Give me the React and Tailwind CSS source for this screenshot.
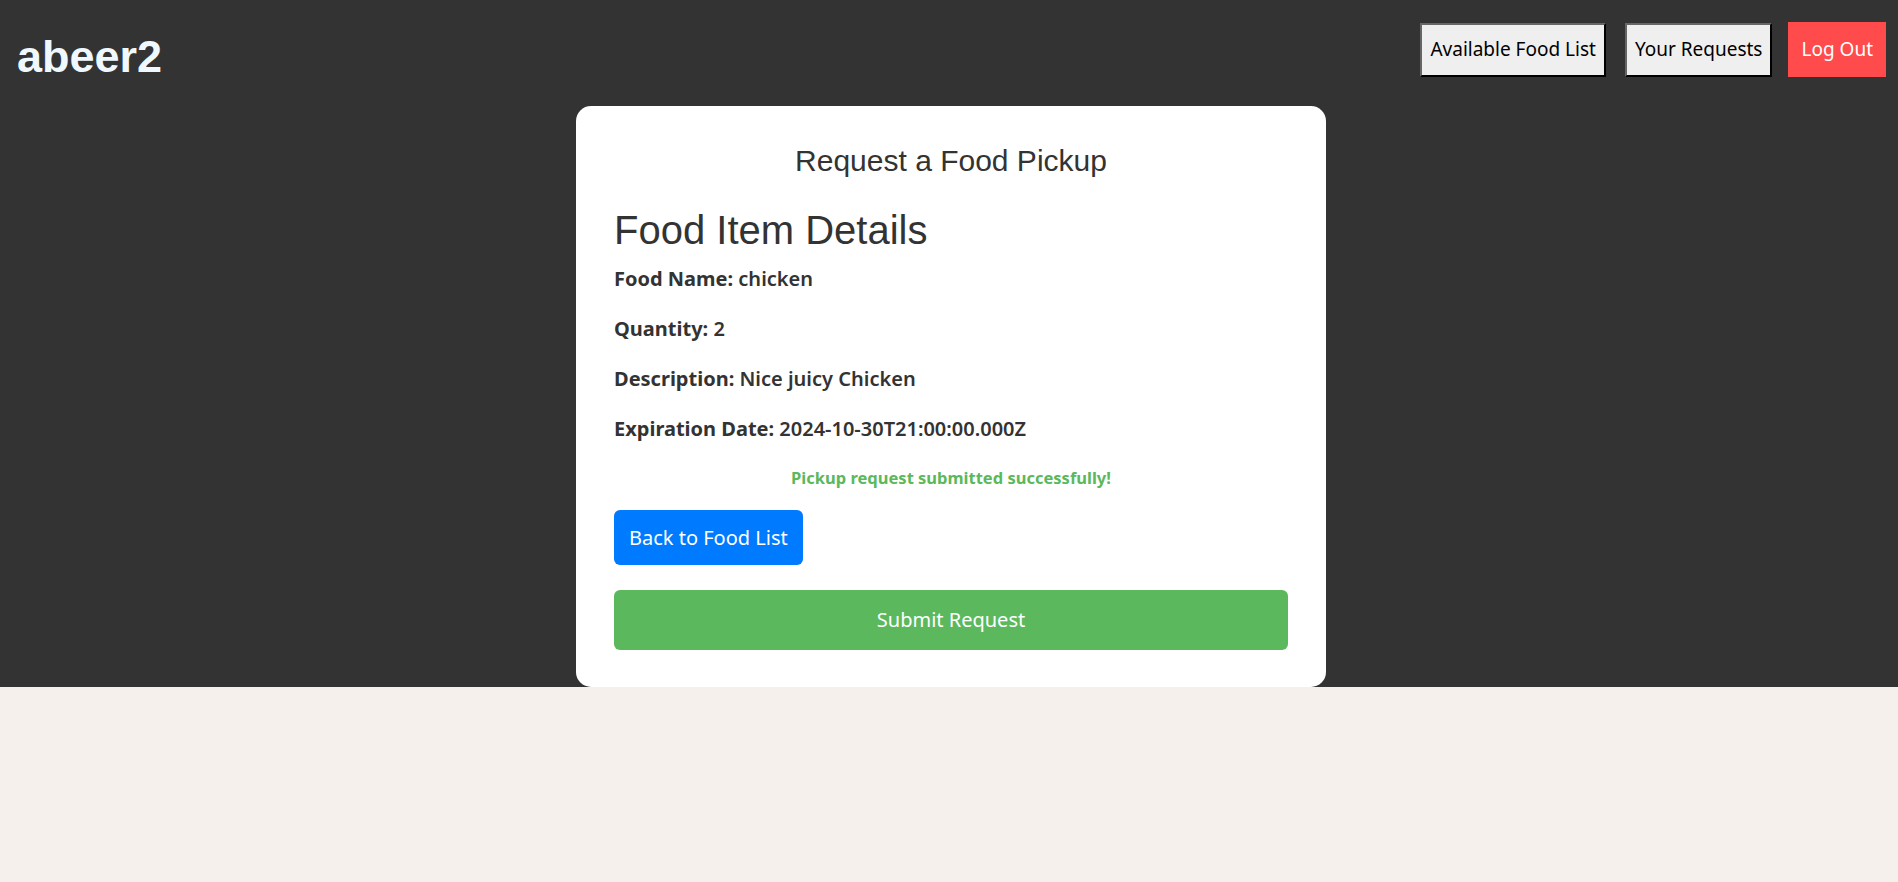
import React from 'react'

const food = {
  name: 'chicken',
  quantity: 2,
  description: 'Nice juicy Chicken',
  expiration: '2024-10-30T21:00:00.000Z',
}

function NavButton({ children, className = '' }) {
  return (
    <button
      className={`h-[54px] px-[8px] flex items-center bg-[#efefef] text-black text-[19px] border-2 border-solid border-t-[#666] border-l-[#666] border-r-black border-b-black ${className}`}
    >
      {children}
    </button>
  )
}

export default function App() {
  const rows = [
    ['Food Name:', food.name],
    ['Quantity:', food.quantity],
    ['Description:', food.description],
    ['Expiration Date:', food.expiration],
  ]

  return (
    <div className="min-h-screen bg-[#f5f0ec] font-['Noto_Sans',sans-serif]">
      <div className="bg-[#333333]">
        {/* top bar */}
        <header className="flex justify-between items-start pl-[17px] pr-[12px] h-[106px]">
          <h1 className="mt-[34px] text-[45px] leading-none font-bold text-[#f0f8ff] font-['Liberation_Sans',Arial,sans-serif]">
            abeer2
          </h1>
          <nav className="flex items-center mt-[22px]">
            <NavButton>Available Food List</NavButton>
            <NavButton className="ml-[19px]">Your Requests</NavButton>
            <button className="ml-[16px] h-[55px] px-[13px] bg-[#ff4b4b] text-white text-[19px]">Log Out</button>
          </nav>
        </header>

        {/* card */}
        <div className="pl-[4px]">
          <div className="w-[750px] mx-auto bg-white rounded-[15px] px-[38px] pt-[40px] pb-[37px] text-[#333]">
            <h2 className="text-center text-[30px] leading-none font-['Liberation_Sans',Arial,sans-serif]">
              Request a Food Pickup
            </h2>
            <h3 className="mt-[34px] text-[40px] leading-none font-['Liberation_Sans',Arial,sans-serif]">
              Food Item Details
            </h3>
            <div className="mt-[14px]">
              {rows.map(([label, value]) => (
                <p key={label} className="text-[20px] leading-[30px] mb-[20px] font-semibold">
                  <strong className="font-bold">{label}</strong> {value}
                </p>
              ))}
            </div>
            <p className="-mt-[1px] text-center text-[16.5px] leading-[30px] font-bold text-[#5cb85c]">
              Pickup request submitted successfully!
            </p>
            <button className="mt-[17px] h-[55px] px-[15px] rounded-[6px] bg-[#007bff] text-white text-[20px]">
              Back to Food List
            </button>
            <button className="mt-[25px] block w-full h-[60px] rounded-[6px] bg-[#5cb85c] text-white text-[20px]">
              Submit Request
            </button>
          </div>
        </div>
      </div>
    </div>
  )
}
